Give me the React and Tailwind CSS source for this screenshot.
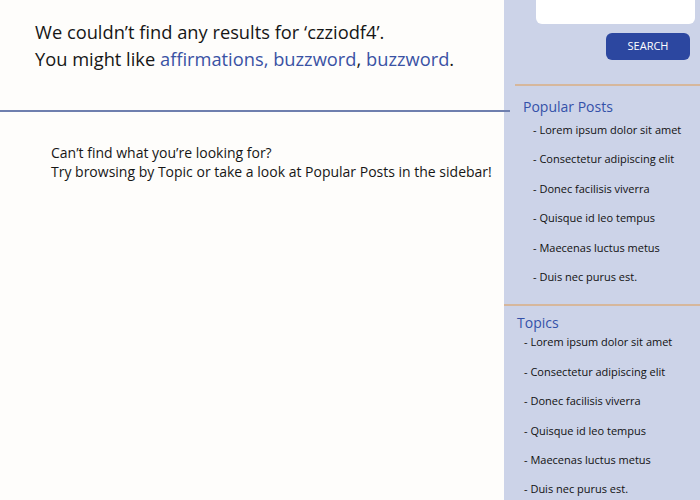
export default function App() {
  const items = [
    "- Lorem ipsum dolor sit amet",
    "- Consectetur adipiscing elit",
    "- Donec facilisis viverra",
    "- Quisque id leo tempus",
    "- Maecenas luctus metus",
    "- Duis nec purus est.",
  ];
  return (
    <div className="flex w-[700px] h-[500px] overflow-hidden bg-[#fefdfb]" style={{ fontFamily: "'Open Sans', sans-serif" }}>
      <div className="w-[504px] shrink-0 flex flex-col">
        <div className="shrink-0 pt-[18px] pl-[35px] text-[18.3px] leading-[27px] text-[#161616]">
          <p>We couldn’t find any results for ‘czziodf4’.</p>
          <p>
            You might like <span className="text-[#3a52a4]">affirmations, buzzword</span>, <span className="text-[#3a52a4]">buzzword</span>.
          </p>
        </div>
        <div className="shrink-0 relative z-10 mt-[38px] w-[510px] border-t-2 border-[#6f7fae]" />
        <div className="shrink-0 pt-[31px] pl-[51px] text-[14px] leading-[19px] text-[#161616]">
          <p>Can’t find what you’re looking for?</p>
          <p>Try browsing by Topic or take a look at Popular Posts in the sidebar!</p>
        </div>
      </div>
      <div className="flex-1 bg-[#ccd3e8] flex flex-col overflow-hidden">
        <div className="shrink-0 ml-[32px] mr-[5px] -mt-[10px] h-[34px] bg-white rounded-md" />
        <div className="shrink-0 flex justify-end pr-[10px] mt-[9px]">
          <div className="w-[84px] h-[27px] rounded-md bg-[#2c47a0] text-white text-[11px] flex items-center justify-center">SEARCH</div>
        </div>
        <div className="shrink-0 ml-[11px] mt-[24px] border-t-2 border-[#d6b79c]" />
        <div className="shrink-0 pl-[19px] mt-[11px] text-[14px] leading-[20px] text-[#3451a8]">Popular Posts</div>
        <div className="shrink-0 pl-[29px] -mt-[2px] text-[11px] text-[#111111]">
          {items.map((t) => (
            <div key={t} className="h-[29.4px] leading-[29.4px]">{t}</div>
          ))}
        </div>
        <div className="shrink-0 mt-[13px] border-t-2 border-[#d6b79c]" />
        <div className="shrink-0 pl-[13px] mt-[7px] text-[14px] leading-[20px] text-[#3451a8]">Topics</div>
        <div className="shrink-0 pl-[20px] -mt-[6px] text-[11px] text-[#111111]">
          {items.map((t) => (
            <div key={t} className="h-[29.4px] leading-[29.4px]">{t}</div>
          ))}
        </div>
      </div>
    </div>
  );
}
